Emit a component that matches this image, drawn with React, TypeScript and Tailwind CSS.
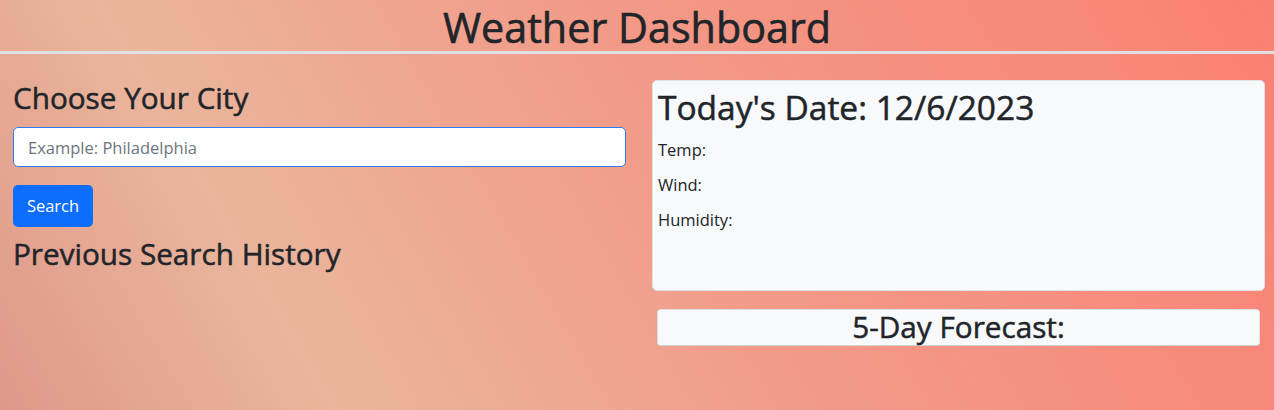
export default function App() {
  return (
    <div className="min-h-screen w-full bg-[linear-gradient(60deg,#df9889_0%,#eab59c_22%,#f29a88_55%,#fa8072_100%)] font-['Open_Sans',sans-serif] text-[#212529]">
      {/* header */}
      <header className="h-[54px] border-b-[3px] border-[#dfe0e2]">
        <h1 className="pt-[2px] text-center text-[41.3px] leading-[50px] [-webkit-text-stroke:0.6px]">Weather Dashboard</h1>
      </header>

      <main className="flex gap-[26px] pl-[13px] pr-[9px] pt-[26px]">
        {/* search column */}
        <section className="flex w-[613px] flex-col">
          <h2 className="text-[29.7px] leading-[36px] [-webkit-text-stroke:0.5px]">Choose Your City</h2>
          <input
            type="text"
            placeholder="Example: Philadelphia"
            className="mt-[11px] h-[40px] w-full rounded-[5px] border border-[#2b7cf2] bg-white px-[14px] text-[16.5px] outline-none placeholder:text-[#6c757d]"
          />
          <button className="mt-[18px] h-[42px] w-[80px] rounded-[5px] bg-[#0d6efd] text-[16.5px] text-white">
            Search
          </button>
          <h2 className="mt-[9px] text-[29.7px] leading-[36px] [-webkit-text-stroke:0.5px]">Previous Search History</h2>
        </section>

        {/* weather column */}
        <section className="flex w-[613px] flex-col">
          <div className="h-[211px] rounded-[5px] border border-[#dee2e6] bg-[#f8f9fa] px-[5px] pt-[6px]">
            <h2 className="text-[33.5px] leading-[40px] [-webkit-text-stroke:0.5px]">Today's Date: 12/6/2023</h2>
            <div className="mt-[11px] flex flex-col gap-[11px] text-[16.5px] leading-[24px]">
              <p>Temp:</p>
              <p>Wind:</p>
              <p>Humidity:</p>
            </div>
          </div>
          <div className="mx-[5px] mt-[18px] h-[37px] rounded-[4px] border border-[#dcdfe3] border-b-[#cfd3d7] bg-[#f8f9fa] text-center text-[29.7px] leading-[34px] [-webkit-text-stroke:0.5px]">
            5-Day Forecast:
          </div>
        </section>
      </main>
    </div>
  );
}
